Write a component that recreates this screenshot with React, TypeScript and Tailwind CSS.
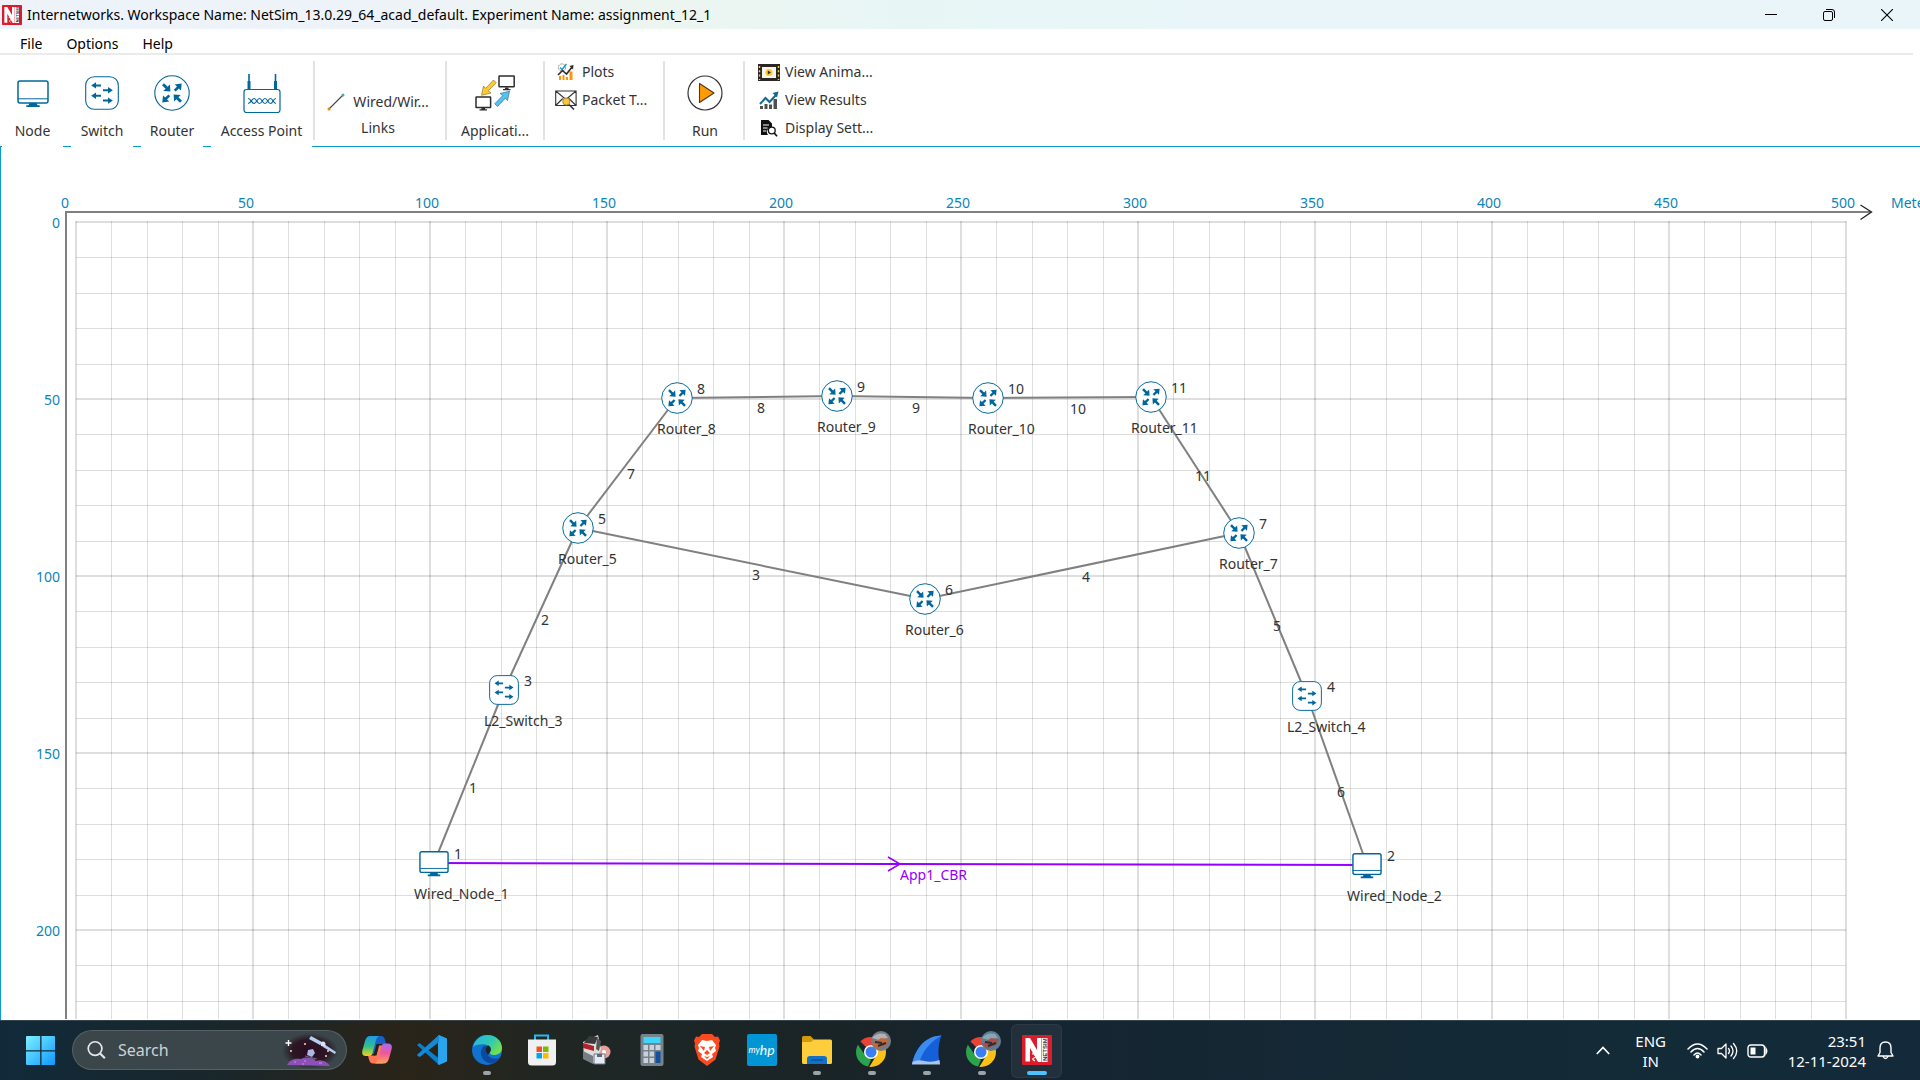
import React from "react";

type Kind = "router" | "switch" | "node";
type Device = { id: number; name: string; kind: Kind; x: number; y: number };

const devices: Device[] = [
  { id: 1, name: "Wired_Node_1", kind: "node", x: 434, y: 863 },
  { id: 2, name: "Wired_Node_2", kind: "node", x: 1367, y: 865 },
  { id: 3, name: "L2_Switch_3", kind: "switch", x: 504, y: 690 },
  { id: 4, name: "L2_Switch_4", kind: "switch", x: 1307, y: 696 },
  { id: 5, name: "Router_5", kind: "router", x: 578, y: 528 },
  { id: 6, name: "Router_6", kind: "router", x: 925, y: 599 },
  { id: 7, name: "Router_7", kind: "router", x: 1239, y: 533 },
  { id: 8, name: "Router_8", kind: "router", x: 677, y: 398 },
  { id: 9, name: "Router_9", kind: "router", x: 837, y: 396 },
  { id: 10, name: "Router_10", kind: "router", x: 988, y: 398 },
  { id: 11, name: "Router_11", kind: "router", x: 1151, y: 397 },
];

const links = [
  { id: 1, from: 1, to: 3, x: 469, y: 788 },
  { id: 2, from: 3, to: 5, x: 541, y: 620 },
  { id: 3, from: 5, to: 6, x: 752, y: 575 },
  { id: 4, from: 6, to: 7, x: 1082, y: 577 },
  { id: 5, from: 7, to: 4, x: 1273, y: 626 },
  { id: 6, from: 4, to: 2, x: 1337, y: 792 },
  { id: 7, from: 5, to: 8, x: 627, y: 474 },
  { id: 8, from: 8, to: 9, x: 757, y: 408 },
  { id: 9, from: 9, to: 10, x: 912, y: 408 },
  { id: 10, from: 10, to: 11, x: 1070, y: 409 },
  { id: 11, from: 11, to: 7, x: 1195, y: 476 },
];

/* Vertical distance from the window's top to the canvas. */
const TOP = 146;
const device = (id: number) => devices.find((d) => d.id === id)!;

const BLUE = "#00679c";

function RouterIcon({ size }: { size: number }) {
  return (
    <svg width={size} height={size} viewBox="0 0 36 36" aria-hidden="true">
      <circle cx="18" cy="18" r="17.2" fill="#fff" stroke={BLUE} strokeWidth="1.1" />
      <g fill={BLUE}>
        {[0, 180].map((a) => (
          <g key={a} transform={`rotate(${a} 18 18)`}>
            <path d="M8 10.2 L10 8.2 L13.6 11.8 L15.9 9.5 L16.4 16.6 L9.3 16.1 L11.6 13.8 Z" />
            <path d="M19.8 14.8 L23 11.6 L20.6 9.4 L27.7 8.6 L27 15.6 L24.8 13.4 L21.6 16.6 Z" />
          </g>
        ))}
      </g>
    </svg>
  );
}

function SwitchIcon({ size }: { size: number }) {
  return (
    <svg width={size} height={size} viewBox="0 0 34 34" aria-hidden="true">
      <rect x="0.7" y="0.7" width="32.6" height="32.6" rx="8.5" fill="#fff" stroke={BLUE} strokeWidth="1.1" />
      <g fill={BLUE}>
        {[0, 10.4].map((o) => (
          <g key={o} transform={`translate(0 ${o})`}>
            <path d="M6.2 9.4 L11 6.2 V8.4 H16 V10.4 H11 V12.6 Z" />
            <path d="M27.8 14.2 L23 11 V13.2 H18 V15.2 H23 V17.4 Z" />
          </g>
        ))}
      </g>
    </svg>
  );
}

function NodeIcon({ size }: { size: number }) {
  return (
    <svg width={size} height={size} viewBox="0 0 32 32" aria-hidden="true">
      <path d="M12.5 26h7l1 2.2h2.2V30H9.300v-1.800h2.200z" fill={BLUE} />
      <rect x="1" y="4" width="30" height="22" rx="2" fill="#fff" stroke={BLUE} strokeWidth="1.500" />
      <path d="M1 21.800h30" stroke={BLUE} strokeWidth="1" />
    </svg>
  );
}

function AccessPointIcon() {
  return (
    <svg width="38" height="40" viewBox="0 0 38 40" aria-hidden="true">
      <g stroke={BLUE} fill="none">
        <path d="M6 1v16M32.500 1v16" strokeWidth="1.600" />
        <path d="M6 8v8M32.500 8v8" strokeWidth="3" />
        <rect x="1" y="16.500" width="36" height="23" rx="2.500" strokeWidth="1.200" fill="#fff" />
        <path d="M5 25.500c3 0 3.500 5 6 5s3-5 5.500-5 3 5 5.500 5 3-5 5.500-5 2.500 5 5.500 5M5 30.500c3 0 3.500-5 6-5s3 5 5.500 5 3-5 5.500-5 3 5 5.500 5 2.500-5 5.500-5" strokeWidth="1.200" />
      </g>
    </svg>
  );
}

function WireIcon() {
  return (
    <svg width="18" height="18" viewBox="0 0 18 18" aria-hidden="true">
      <path d="M2 16L16 2" stroke="#444" strokeWidth="1.100" />
      <circle cx="2" cy="16" r="1.500" fill="#e88b00" />
      <circle cx="16" cy="2" r="1.500" fill="#4ba5c8" />
    </svg>
  );
}

function ApplicationIcon() {
  return (
    <svg width="40" height="36" viewBox="0 0 40 36" aria-hidden="true">
      <g fill="#fff" stroke="#2d2d2d" strokeWidth="1.500">
        <rect x="24" y="1" width="15.200" height="10.800" rx="0.500" />
        <rect x="1" y="22" width="14.600" height="10.500" rx="0.500" />
      </g>
      <path d="M30 12.500h3.500v1.500h2v1.200h-7.500V14h2zM6.500 33h3.500v1.300h2v1.200H4.500v-1.200h2z" fill="#2d2d2d" />
      <path d="M18.500 5l2.800 2.800-8 8 2.700 2.200-9.500 2.300L8.500 11l2.200 2.300z" fill="#ffc931" stroke="#806414" strokeWidth="0.600" />
      <path d="M22.500 31.500l-2.800-2.800 8-8-2.700-2.200 9.500-2.300-2 9.300-2.200-2.300z" fill="#54c2f5" stroke="#286080" strokeWidth="0.600" />
    </svg>
  );
}

function PlotsIcon() {
  return (
    <svg width="18" height="18" viewBox="0 0 18 18" aria-hidden="true">
      <path d="M2 17v-4h2v4zM5.500 17v-5h2v5zM9 17v-3h2v3zM12.500 17V8.500h3V17z" fill="#ff9500" />
      <circle cx="5" cy="4.500" r="3.600" fill="none" stroke="#667a88" strokeWidth="0.900" strokeDasharray="2 1" />
      <path d="M3 4.500l2 2L9.500 1" fill="none" stroke="#1a93c9" strokeWidth="1.300" />
      <path d="M1 12l4.500-4.500L9.500 11l6-7.500" fill="none" stroke="#2d2d2d" strokeWidth="1.600" />
      <path d="M12.500 3l4-1-.5 4.500z" fill="#2d2d2d" />
    </svg>
  );
}

function PacketIcon() {
  return (
    <svg width="22" height="20" viewBox="0 0 22 20" aria-hidden="true">
      <path d="M.7 1h20.400v14.500H.7zL11 9.500 21 1M.7 15.500l7-7M21 15.500l-7-7" fill="#fff" stroke="#333" strokeWidth="1.100" />
      <circle cx="11.300" cy="11.500" r="3.600" fill="#f5c842" stroke="#a87d22" strokeWidth="0.900" />
      <path d="M14 14.500l5 5" stroke="#333" strokeWidth="1.600" />
    </svg>
  );
}

function AnimationIcon() {
  return (
    <svg width="22" height="17" viewBox="0 0 22 17" aria-hidden="true">
      <path d="M0 0h22v17H0z" fill="#2b2622" />
      <path d="M1.500 2v14M20.500 2v14" stroke="#ffd04a" strokeWidth="1.400" strokeDasharray="2 2.300" />
      <rect x="4" y="3" width="14" height="11" fill="#f6f4ef" />
      <circle cx="11" cy="8.500" r="3.600" fill="#ffc931" />
      <path d="M9.800 6.500v4l3.200-2z" fill="#333" />
    </svg>
  );
}

function ResultsIcon() {
  return (
    <svg width="20" height="19" viewBox="0 0 20 19" aria-hidden="true">
      <path d="M1 18v-3h3v3zM5.500 18v-5h3v5zM10 18v-4.500h3V18zM14.500 18V8h3.500v10z" fill="#505050" />
      <path d="M1 13l5.500-6 4 4L17.500 3.500" fill="none" stroke="#0d6b93" strokeWidth="2" />
      <path d="M13.500 2l6-1.500L18 6.500z" fill="#0d6b93" />
    </svg>
  );
}

function DisplayIcon() {
  return (
    <svg width="18" height="17" viewBox="0 0 18 17" aria-hidden="true">
      <path d="M1 0h7.500L12 3.500V7a5 5 0 00-4 8H1z" fill="#111" />
      <path d="M3 5h6M3 8h4.500M3 11h3.500" stroke="#fff" strokeWidth="1" />
      <circle cx="11.800" cy="10.500" r="3.400" fill="#fff" stroke="#111" strokeWidth="1.300" />
      <path d="M14.200 13l2.800 3.300" stroke="#111" strokeWidth="1.700" />
    </svg>
  );
}

function NetSimLogo({ size }: { size: number }) {
  return (
    <svg width={size} height={size} viewBox="0 0 30 30" aria-hidden="true">
      <rect width="30" height="30" rx="1" fill="#dd1c2b" />
      <rect x="19.500" y="3" width="6" height="24" fill="#fff" />
      <path d="M3.500 26.500V3h4.500L15 15V3h4v24h-3L8 13v13.500z" fill="#fff" />
      <path d="M10 19q3-1 4 1t-2 3 1 3" fill="none" stroke="#fff" strokeWidth="1.200" />
      <text x="-26" y="25" transform="rotate(-90)" fontFamily="Liberation Sans" fontWeight="700" fontSize="6" fill="#333">
        NETSIM
      </text>
    </svg>
  );
}

function BigTool({ label, children, className }: { label: string; children: React.ReactNode; className: string }) {
  return (
    <button className={`${className} flex h-[92px] shrink-0 flex-col items-center bg-white pt-[18px] hover:bg-sky-50`}>
      <span className="flex h-10 items-center justify-center">{children}</span>
      <span className="mt-2 text-sm leading-5 whitespace-nowrap">{label}</span>
    </button>
  );
}

function SmallTool({ label, children }: { label: string; children: React.ReactNode }) {
  return (
    <button className="flex h-7 items-center gap-1 text-sm leading-5 whitespace-nowrap">
      <span className="flex w-6 justify-center">{children}</span>
      {label}
    </button>
  );
}

function Divider() {
  return <div className="mt-[6px] h-[79px] w-[2px] shrink-0 bg-[#e3e3e3]" />;
}

function TaskIcon({ label, running, active, children }: { label: string; running?: boolean; active?: boolean; children: React.ReactNode }) {
  return (
    <button
      aria-label={label}
      className={`relative mx-[2px] flex h-[54px] w-[51px] shrink-0 items-center justify-center rounded-md pb-[2px] ${
        active ? "border border-white/5 bg-white/5" : ""
      }`}
    >
      {children}
      {running && <span className="absolute bottom-[3px] h-1 w-2 rounded-full bg-[#9da3a6]" />}
      {active && <span className="absolute bottom-[2px] h-1 w-5 rounded-full bg-[#4cc2ff]" />}
    </button>
  );
}

function Chrome({ id, tones }: { id: string; tones: [string, string, string] }) {
  return (
    <svg width="38" height="40" viewBox="0 0 38 40" aria-hidden="true">
      <clipPath id={id}>
        <circle cx="18" cy="22" r="15" />
      </clipPath>
      <g clipPath={`url(#${id})`}>
        <path d="M18 22L3 7H35V16H18z" fill="#ea4335" />
        <path d="M3 12L12 25l6 5-4 9H0V9z" fill="#2ba24c" />
        <path d="M18 15h18v24H15l8-13z" fill="#fbc116" />
      </g>
      <circle cx="18" cy="22" r="7" fill="#fff" />
      <circle cx="18" cy="22" r="5.500" fill="#3c7df0" />
      <circle cx="28" cy="11" r="10" fill={tones[0]} />
      <path d="M19 8q5-6 13-4l3 4-9 2z" fill={tones[1]} />
      <path d="M19 14l9-6 8 1-3 6-9 4z" fill={tones[2]} />
      <path d="M22 12l7 1M25 16l8-3" stroke="#2c2e35" strokeWidth="2" />
    </svg>
  );
}

function Copilot() {
  return (
    <svg width="30" height="28" viewBox="0 0 30 28" aria-hidden="true">
      <defs>
        <linearGradient id="cp1" x1="0" y1="0" x2="0" y2="1">
          <stop offset="0" stopColor="#1f9ae8" />
          <stop offset="0.500" stopColor="#2cc08a" />
          <stop offset="1" stopColor="#f3d11c" />
        </linearGradient>
        <linearGradient id="cp2" x1="0" y1="0" x2="0" y2="1">
          <stop offset="0" stopColor="#a86af2" />
          <stop offset="0.500" stopColor="#f0589a" />
          <stop offset="1" stopColor="#ffa257" />
        </linearGradient>
      </defs>
      <path d="M9 0h10q3 0 4 4l1 4h-7l-3 10H9z" fill="#1860c8" />
      <path d="M21 27.500H11q-3 0-4-4l-1-4h7l3-10h6z" fill="#ff7755" />
      <path d="M8 0h9q-2 1-3 4l-3.500 13Q10 20 7 20H4q-5 0-3.500-6L3 5q1.500-5 5-5z" fill="url(#cp1)" />
      <path d="M22 27.500h-9q2-1 3-4l3.500-13q.500-3 3.500-3h3q5 0 3.500 6l-2.500 9q-1.500 5-5 5z" fill="url(#cp2)" />
      <path d="M14.500 8h3l-3 11.500h-3z" fill="#241f19" />
    </svg>
  );
}

function Edge() {
  return (
    <svg width="30" height="30" viewBox="0 0 30 30" aria-hidden="true">
      <defs>
        <linearGradient id="eg1" x1="0" y1="0" x2="1" y2="0.600">
          <stop offset="0" stopColor="#28b2e8" />
          <stop offset="0.600" stopColor="#2fc9b4" />
          <stop offset="1" stopColor="#74e04c" />
        </linearGradient>
      </defs>
      <circle cx="15" cy="15" r="15" fill="#0f73cf" />
      <path d="M1 12C3 4 9 0 15.500 0 24 0 30 6 30 13c0 5-4 7-8 7-3 0-5-1.500-4-3 2-3 0-7-5-7.500C8 9 3 10 1 12z" fill="url(#eg1)" />
      <path d="M12 11c-6 5-3 16 7 17.500 4 0 7-2.500 9-6-6 3-13 0-13-6 0-2 1-3 2-4-1-1-3-2-5-1.500z" fill="#0c4aa0" />
      <path d="M18 17c2-3 0-6-2-6.500-2.500 1.500-3.500 5 0 9.500z" fill="#1b2528" />
    </svg>
  );
}

function SearchArt() {
  return (
    <svg width="56" height="36" viewBox="0 0 56 36" aria-hidden="true">
      <defs>
        <radialGradient id="sky">
          <stop offset="0" stopColor="#2a0a20" />
          <stop offset="0.650" stopColor="#2a1220" stopOpacity="0.900" />
          <stop offset="1" stopColor="#2a1a24" stopOpacity="0" />
        </radialGradient>
      </defs>
      <ellipse cx="28" cy="19" rx="28" ry="18" fill="url(#sky)" />
      <path d="M5 33c3-6 9-7 14-6 6-3 12-1 15 2 5-2 11 0 14 5z" fill="#8d4fb8" />
      <path d="M12 30h2M22 29h2M20 32h2M37 31h3" stroke="#c790e8" />
      <path d="M29 4l11 6-2 3-11-6zM42 12l12 8-1 2-12-7z" fill="#b6cdf2" />
      <circle cx="41" cy="12" r="2.500" fill="#dbe2f5" />
      <path d="M26 18l5-1 2 4-3 4-5-2z" fill="#a9b9e4" />
      <path d="M23 24l12 3M27 27h6" stroke="#6a6b82" />
      <path d="M6.500 8v6M3.500 11h6" stroke="#fff" strokeWidth="1.400" />
      <path d="M8 19h2M22 12h2M45 19h2M43 24h2" stroke="#ffd6c2" strokeWidth="1.500" />
    </svg>
  );
}

const gridX = Array.from({ length: 51 }, (_, i) => i);
const gridY = Array.from({ length: 30 }, (_, i) => i);

function gridPos(origin: number, i: number) {
  const p = Math.round(origin + i * 35.4);
  return i % 5 === 0 ? p : p + 0.5;
}

function Canvas() {
  const a = device(1);
  const b = device(2);
  return (
    <main className="relative min-h-0 flex-1 overflow-hidden border-t border-l border-[#0a9bcd] bg-white">
      <div className="absolute -top-px -left-px size-full text-sm leading-5 whitespace-nowrap">
        <svg className="absolute inset-0 size-full" aria-hidden="true">
          <g transform={`translate(0 ${-TOP})`}>
            <g stroke="#000" strokeOpacity="0.130">
              {gridX.map((i) => (
                <path key={i} d={`M${gridPos(76, i)} 221V1200`} strokeWidth={i % 5 ? 1 : 2} />
              ))}
              {gridY.map((i) => (
                <path key={i} d={`M76 ${gridPos(222, i)}H1846`} strokeWidth={i % 5 ? 1 : 2} />
              ))}
            </g>
            <path d="M66 1200V212H1871" fill="none" stroke="#808080" strokeWidth="2" />
            <path d="M1860.500 205l11 7-11 7.500" fill="none" stroke="#222" strokeWidth="1.300" />
            <g stroke="#808080" strokeWidth="2">
              {links.map((l) => {
                const p = device(l.from);
                const q = device(l.to);
                return <path key={l.id} d={`M${p.x} ${p.y}L${q.x} ${q.y}`} />;
              })}
            </g>
            <path d={`M${a.x} ${a.y}L${b.x} ${b.y}`} stroke="#9400ff" strokeWidth="2" />
            <path d="M888 857l12 7-12 7" fill="none" stroke="#9400ff" strokeWidth="1.500" />
          </g>
        </svg>

        <div className="text-[#0c84b8]">
          {Array.from({ length: 11 }, (_, i) => (
            <span
              key={i}
              className="absolute -translate-x-1/2"
              style={{ left: i === 0 ? 65 : i === 1 ? 246 : 427 + (i - 2) * 177, top: 193 - TOP }}
            >
              {i * 50}
            </span>
          ))}
          {Array.from({ length: 5 }, (_, i) => (
            <span key={i} className="absolute w-[60px] text-right" style={{ left: 0, top: 213 + i * 177 - TOP }}>
              {i * 50}
            </span>
          ))}
          <span className="absolute" style={{ left: 1891, top: 193 - TOP }}>
            Meters
          </span>
        </div>

        {devices.map((d) => (
          <div key={d.id} className="absolute text-[#333]" style={{ left: d.x, top: d.y - TOP }}>
            <span className="absolute flex -translate-x-1/2 -translate-y-1/2">
              {d.kind === "router" && <RouterIcon size={32} />}
              {d.kind === "switch" && <SwitchIcon size={30} />}
              {d.kind === "node" && <NodeIcon size={30} />}
            </span>
            <span className="absolute -top-[19px] left-5">{d.id}</span>
            <span className="absolute top-[21px] -left-5">{d.name}</span>
          </div>
        ))}
        {links.map((l) => (
          <span key={l.id} className="absolute text-[#333]" style={{ left: l.x, top: l.y - 10 - TOP }}>
            {l.id}
          </span>
        ))}
        <span className="absolute text-[#9400ff]" style={{ left: 900, top: 865 - TOP }}>
          App1_CBR
        </span>
      </div>
    </main>
  );
}

export default function App() {
  return (
    <div className="flex h-screen flex-col overflow-hidden bg-white font-['Noto_Sans','Open_Sans',sans-serif] text-[#333]">
      <header className="flex h-[29px] shrink-0 items-center bg-[linear-gradient(90deg,#eef3fb_0%,#edf3f8_20%,#edf5f0_34%,#e7f6f5_47%,#eaf5fa_70%,#eaf5fa_100%)] pl-[2px] text-black">
        <NetSimLogo size={20} />
        <h1 className="ml-[5px] flex-1 text-sm leading-5 whitespace-nowrap">
          Internetworks. Workspace Name: NetSim_13.0.29_64_acad_default. Experiment Name: assignment_12_1
        </h1>
        <button aria-label="Minimize" className="flex w-[58px] justify-center">
          <svg width="12" height="12" viewBox="0 0 12 12"><path d="M0 5.500h12" stroke="#000" /></svg>
        </button>
        <button aria-label="Restore" className="flex w-[58px] justify-center">
          <svg width="12" height="12" viewBox="0 0 12 12" fill="none" stroke="#000">
            <rect x="0.500" y="2.500" width="9" height="9" rx="1.500" />
            <path d="M3 .500h6q2.500 0 2.500 2.500v6" />
          </svg>
        </button>
        <button aria-label="Close" className="mr-1 flex w-[58px] justify-center">
          <svg width="12" height="12" viewBox="0 0 12 12"><path d="M0 0l12 12M12 0L0 12" stroke="#000" strokeWidth="1.100" /></svg>
        </button>
      </header>

      <nav className="mr-[7px] flex h-[26px] shrink-0 items-end gap-6 border-b-2 border-[#ebebeb] pl-5 text-sm leading-[18px] text-black">
        <button>File</button>
        <button>Options</button>
        <button>Help</button>
      </nav>

      <div role="toolbar" aria-label="Devices and tools" className="relative z-10 flex h-[91px] shrink-0 items-start pl-[2px]">
        <div className="flex gap-2">
          <BigTool label="Node" className="w-[61px]"><NodeIcon size={32} /></BigTool>
          <BigTool label="Switch" className="w-[62px]"><SwitchIcon size={34} /></BigTool>
          <BigTool label="Router" className="w-[62px]"><RouterIcon size={36} /></BigTool>
          <BigTool label="Access Point" className="w-[101px]"><AccessPointIcon /></BigTool>
        </div>
        <div className="w-px" />
        <Divider />
        <button className="flex h-[85px] w-[130px] shrink-0 flex-col items-center pt-[37px] pr-1 text-sm leading-5 whitespace-nowrap">
          <span className="flex items-center gap-2">
            <WireIcon />
            Wired/Wir...
          </span>
          <span className="mt-[6px]">Links</span>
        </button>
        <Divider />
        <div className="h-[85px] w-[96px] shrink-0 overflow-hidden">
          <BigTool label="Applicati..." className="w-full"><ApplicationIcon /></BigTool>
        </div>
        <Divider />
        <div className="flex w-[118px] shrink-0 flex-col pt-[3px] pl-[9px]">
          <SmallTool label="Plots"><PlotsIcon /></SmallTool>
          <SmallTool label="Packet T..."><PacketIcon /></SmallTool>
        </div>
        <Divider />
        <div className="h-[85px] w-[78px] shrink-0 overflow-hidden pl-[2px]">
          <BigTool label="Run" className="w-full">
            <svg width="36" height="36" viewBox="0 0 36 36" aria-hidden="true">
              <circle cx="18" cy="18" r="17" fill="#fff" stroke="#333" strokeWidth="1.200" />
              <path d="M12.500 8.500v19L27 18z" fill="#ff9a00" stroke="#4a3a20" strokeWidth="1.100" strokeLinejoin="round" />
            </svg>
          </BigTool>
        </div>
        <Divider />
        <div className="flex shrink-0 flex-col pt-[3px] pl-3">
          <SmallTool label="View Anima..."><AnimationIcon /></SmallTool>
          <SmallTool label="View Results"><ResultsIcon /></SmallTool>
          <SmallTool label="Display Sett..."><DisplayIcon /></SmallTool>
        </div>
      </div>

      <Canvas />

      <footer className="flex h-[60px] shrink-0 items-center border-t border-[#34454e] bg-[linear-gradient(90deg,#112a3a_0%,#1a2629_12%,#2a2419_21%,#1e2725_31%,#1a2427_43%,#162532_55%,#132a36_80%,#142a3b_100%)] text-white">
        <button aria-label="Start" className="flex w-[72px] justify-center pl-[10px]">
          <svg width="30" height="30" viewBox="0 0 30 30" aria-hidden="true">
            <defs>
              <linearGradient id="win" x1="0" y1="0" x2="1" y2="1">
                <stop offset="0" stopColor="#7df0ff" />
                <stop offset="1" stopColor="#0f98ff" />
              </linearGradient>
            </defs>
            <path d="M0 1q0-1 1-1h13.200v14.200H0zM15.500 0H28q1 0 1 1v13.200H15.500zM0 15.500h14.200V29H1q-1 0-1-1zM15.500 15.500H29V28q0 1-1 1H15.500z" fill="url(#win)" />
          </svg>
        </button>
        <label className="-mt-px flex h-10 w-[275px] shrink-0 items-center rounded-full border border-white/15 bg-[#3a464a] pr-2 pl-[14px]">
          <svg width="19" height="20" viewBox="0 0 20 20" fill="none" stroke="#e5e7e8" strokeWidth="1.800" aria-hidden="true">
            <circle cx="8.500" cy="8.500" r="7.200" />
            <path d="M13.800 13.800l5 5" strokeWidth="2.200" />
          </svg>
          <input type="text" aria-label="Search" placeholder="Search" className="ml-3 min-w-0 flex-1 bg-transparent text-base leading-5 outline-none placeholder:text-[#cfd3d4]" />
          <SearchArt />
        </label>
        <div className="ml-[2px] flex items-center">
          <TaskIcon label="Copilot"><Copilot /></TaskIcon>
          <TaskIcon label="Visual Studio Code">
            <svg width="30" height="30" viewBox="0 0 30 30" aria-hidden="true">
              <path d="M0 10l2.500-2L22 23.500V30z" fill="#0b7fc9" />
              <path d="M0 20l2.500 2L22 6.500V0z" fill="#0a6fb4" />
              <path d="M22 0l8 3.500v23L22 30l-1-1V1z" fill="#2ba4ee" />
              <path d="M0 20l2.500 2L22 7V0z" fill="#1489d6" />
            </svg>
          </TaskIcon>
          <TaskIcon label="Microsoft Edge" running><Edge /></TaskIcon>
          <TaskIcon label="Microsoft Store">
            <svg width="30" height="32" viewBox="0 0 30 32" aria-hidden="true">
              <path d="M8 7V1.500h13V7" fill="none" stroke="#28b8ef" strokeWidth="2" />
              <path d="M1 5.500h28V28q0 3.500-3.500 3.500h-21Q1 31.500 1 28z" fill="#f0f0f0" />
              <path d="M9.500 12.500H15V18H9.500z" fill="#f25022" />
              <path d="M16 12.500h5.500V18H16z" fill="#7fba00" />
              <path d="M9.500 19H15v5.500H9.500z" fill="#00a4ef" />
              <path d="M16 19h5.500v5.500H16z" fill="#ffb900" />
            </svg>
          </TaskIcon>
          <TaskIcon label="Software installer">
            <svg width="30" height="32" viewBox="0 0 30 32" aria-hidden="true">
              <circle cx="22" cy="18" r="6.500" fill="#e9a09b" />
              <circle cx="22" cy="18" r="2" fill="#fff" />
              <path d="M1 8L16 1l3 14-6 15-11-5z" fill="#ddd" />
              <path d="M2 9l5-7 9 1-3 7z" fill="#3a3a3a" />
              <path d="M1 9l11 3v5L1 14z" fill="#b6202a" />
              <path d="M1 17l10 5v8L1 25z" fill="#777d82" />
              <path d="M15 4l4 3-2 10-3-2z" fill="#555" />
              <path d="M12 20h11v10H12z" fill="#e6ebf2" stroke="#6e7784" />
              <path d="M15 20h5v3h-5z" fill="#5e6876" />
            </svg>
          </TaskIcon>
          <TaskIcon label="Calculator">
            <svg width="24" height="32" viewBox="0 0 24 32" aria-hidden="true">
              <rect x="0.500" width="23" height="32" rx="2" fill="#76838d" />
              <path d="M3.500 3h17v6h-17z" fill="#3fd4f8" />
              <path d="M3.500 11H8v5H3.500zM9.500 11H14v5H9.500zM15.500 11h5v5h-5zM3.500 17.500H8v5H3.500zM9.500 17.500H14v5H9.500zM3.500 24H8v5H3.500zM9.500 24H14v5H9.500z" fill="#c9d2da" />
              <path d="M15.500 17.500h5V29h-5z" fill="#15509a" />
            </svg>
          </TaskIcon>
          <TaskIcon label="Brave">
            <svg width="26" height="32" viewBox="0 0 26 32" aria-hidden="true">
              <path d="M8 0h10l3 3 3-.500 2 4-1 3 .5 3-4 13L13 32 4.500 25.500.5 12.500 1 9.500l-1-3 2-4L5 3z" fill="#fb4a1f" />
              <path d="M8 6l5 1 5-1 4 5-1 3 1 3-4 3 1 3-6 4-6-4 1-3-4-3 1-3-1-3z" fill="#fff" />
              <path d="M6 12l5 1-1 4zM20 12l-5 1 1 4zM13 16l3 3-3 2-3-2zM10 22l3 1 3-1-3 3z" fill="#fb4a1f" />
            </svg>
          </TaskIcon>
          <TaskIcon label="myHP">
            <span className="flex h-8 w-[30px] items-center justify-center rounded-[2px] bg-[#0096d6] font-['Lato'] leading-none text-white italic">
              <span className="text-[9px]">my</span>
              <span className="text-sm leading-none">hp</span>
            </span>
          </TaskIcon>
          <TaskIcon label="File Explorer" running>
            <svg width="30" height="28" viewBox="0 0 30 28" aria-hidden="true">
              <path d="M0 1.500Q0 0 1.500 0h7L12 3.500V9H0z" fill="#d69a08" />
              <path d="M0 6h9l3-2.500h16.500Q30 3.500 30 5v21.500q0 1.500-1.500 1.500h-27Q0 28 0 26.500z" fill="#fdcd3c" />
              <path d="M5 28v-5q0-3 3-3h14q3 0 3 3v5z" fill="#1272c8" />
              <path d="M9 24h12" stroke="#0a4a8a" strokeWidth="1.200" />
            </svg>
          </TaskIcon>
          <TaskIcon label="Google Chrome, profile 1" running><Chrome id="chr1" tones={["#777b82", "#aeb3b8", "#c5673a"]} /></TaskIcon>
          <TaskIcon label="Wireshark" running>
            <svg width="30" height="30" viewBox="0 0 30 30" aria-hidden="true">
              <path d="M0 29C4 12 14 1 29.500.500 26 9 25.500 20 28 29z" fill="#1560d8" />
              <path d="M0 29C4 12 14 1 29.500.500 20 6 12 14 8 25z" fill="#3b8cf0" />
              <path d="M.5 27q5-3 12-1t15-1l.500 4.500H0z" fill="#a9c4ef" />
            </svg>
          </TaskIcon>
          <TaskIcon label="Google Chrome, profile 2" running><Chrome id="chr2" tones={["#5d7f93", "#88a6b5", "#a5524a"]} /></TaskIcon>
          <TaskIcon label="NetSim" active><NetSimLogo size={30} /></TaskIcon>
        </div>

        <div className="ml-auto flex items-center text-[15px] leading-5">
          <button aria-label="Show hidden icons" className="flex w-8 justify-center">
            <svg width="14" height="9" viewBox="0 0 14 9" fill="none" stroke="#fff" strokeWidth="1.700"><path d="M.8 8L7 1.500 13.200 8" /></svg>
          </button>
          <button className="ml-[14px] w-9 text-center">ENG<br />IN</button>
          <button aria-label="Network, sound and battery" className="ml-[18px] flex items-center gap-[9px]">
            <svg width="21" height="16" viewBox="0 0 21 16" fill="none" stroke="#fff" strokeWidth="1.500" strokeLinecap="round">
              <path d="M1 6q9.500-10 19 0M4 9q6.500-7 13 0M7 12q3.500-4 7 0" />
              <circle cx="10.500" cy="13.500" r="1.200" fill="#fff" />
            </svg>
            <svg width="21" height="18" viewBox="0 0 21 18" fill="none" stroke="#fff" strokeWidth="1.300" strokeLinejoin="round">
              <path d="M1 6.500h3.500L9 2v14l-4.500-4.500H1z" />
              <path d="M11.500 6.500q2 2.500 0 5M14 4q4 5 0 10M16.500 1.500q6.500 7.500 0 15" strokeLinecap="round" />
            </svg>
            <svg width="21" height="14" viewBox="0 0 21 14" fill="none" stroke="#fff" strokeWidth="1.400">
              <rect x="1" y="1" width="16.500" height="12" rx="2.800" />
              <path d="M3.500 3.500h5v7h-5z" fill="#fff" stroke="none" />
              <path d="M19 4.500q1.500 2.500 0 5z" fill="#fff" />
            </svg>
          </button>
          <button className="ml-5 text-right">23:51<br />12-11-2024</button>
          <button aria-label="Notifications" className="mr-[26px] ml-[11px]">
            <svg width="17" height="19" viewBox="0 0 17 19" fill="none" stroke="#fff" strokeWidth="1.400" strokeLinejoin="round">
              <path d="M8.500 1Q3 1 3 7v4.500L1 15h15l-2-3.500V7q0-6-5.500-6zM6 15.500q2.500 4 5 0" />
            </svg>
          </button>
        </div>
      </footer>
    </div>
  );
}
